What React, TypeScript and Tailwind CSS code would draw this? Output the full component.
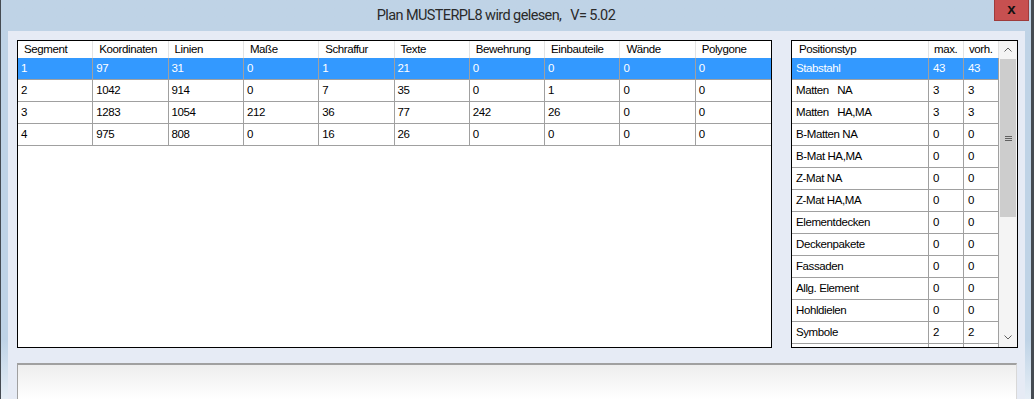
import React from "react";

const font = { fontFamily: '"Liberation Sans", Arial, sans-serif' };

const leftHeaders = ["Segment", "Koordinaten", "Linien", "Maße", "Schraffur", "Texte", "Bewehrung", "Einbauteile", "Wände", "Polygone"];
const leftRows: (string | number)[][] = [
  [1, 97, 31, 0, 1, 21, 0, 0, 0, 0],
  [2, 1042, 914, 0, 7, 35, 0, 1, 0, 0],
  [3, 1283, 1054, 212, 36, 77, 242, 26, 0, 0],
  [4, 975, 808, 0, 16, 26, 0, 0, 0, 0],
];

const rightRows: (string | number)[][] = [
  ["Stabstahl", 43, 43],
  ["Matten   NA", 3, 3],
  ["Matten   HA,MA", 3, 3],
  ["B-Matten NA", 0, 0],
  ["B-Mat HA,MA", 0, 0],
  ["Z-Mat NA", 0, 0],
  ["Z-Mat HA,MA", 0, 0],
  ["Elementdecken", 0, 0],
  ["Deckenpakete", 0, 0],
  ["Fassaden", 0, 0],
  ["Allg. Element", 0, 0],
  ["Hohldielen", 0, 0],
  ["Symbole", 2, 2],
  ["", "", ""],
];

function LeftTable() {
  return (
    <div className="w-[755px] h-[308px] border border-black bg-white overflow-hidden shrink-0">
      <div className="grid grid-cols-10 h-[17px] bg-white">
        {leftHeaders.map((h, i) => (
          <div key={i} className="flex items-center pl-[6px] border-r border-[#e3e3e3] last:border-r-0 text-black whitespace-pre">
            {h}
          </div>
        ))}
      </div>
      {leftRows.map((r, ri) => (
        <div
          key={ri}
          className={
            "grid grid-cols-10 h-[22px] border-b border-[#a0a0a0] " +
            (ri === 0 ? "bg-[#3399ff] text-white" : "bg-white text-black")
          }
        >
          {r.map((c, ci) => (
            <div key={ci} className="flex items-center pl-[3px] border-r border-[#a0a0a0] last:border-r-0">
              {c}
            </div>
          ))}
        </div>
      ))}
    </div>
  );
}

function Chevron({ up }: { up: boolean }) {
  return (
    <svg width="8" height="5" viewBox="0 0 8 5">
      <polyline
        points={up ? "0.5,4.5 4,1 7.5,4.5" : "0.5,0.5 4,4 7.5,0.5"}
        fill="none"
        stroke="#606060"
        strokeWidth="1"
      />
    </svg>
  );
}

function RightTable() {
  return (
    <div className="w-[227px] h-[308px] border border-black bg-white overflow-hidden shrink-0 flex">
      <div className="w-[207px] shrink-0">
        <div className="grid grid-cols-[137px_35px_35px] h-[17px]">
          {["Positionstyp", "max.", "vorh."].map((h, i) => (
            <div
              key={i}
              className={"flex items-center border-r border-[#e3e3e3] " + (i === 0 ? "pl-[7px]" : "pl-[5px]")}
            >
              {h}
            </div>
          ))}
        </div>
        {rightRows.map((r, ri) => (
          <div
            key={ri}
            className={
              "grid grid-cols-[137px_35px_35px] h-[22px] border-b border-[#a0a0a0] " +
              (ri === 0 ? "bg-[#3399ff] text-white" : "bg-white text-black")
            }
          >
            {r.map((c, ci) => (
              <div key={ci} className="flex items-center pl-[4px] border-r border-[#a0a0a0] whitespace-pre">
                {c}
              </div>
            ))}
          </div>
        ))}
      </div>
      <div className="w-[18px] shrink-0 bg-[#f4f4f4] flex flex-col">
        <div className="h-[17px] flex items-center justify-center">
          <Chevron up />
        </div>
        <div className="mx-[1px] mt-[1px] h-[158px] bg-[#cdcdcd] flex flex-col items-center justify-center gap-[1px]">
          <div className="w-[7px] h-[1px] bg-[#606060]" />
          <div className="w-[7px] h-[1px] bg-[#606060]" />
          <div className="w-[7px] h-[1px] bg-[#606060]" />
        </div>
        <div className="flex-1" />
        <div className="h-[17px] flex items-center justify-center mb-[1px]">
          <Chevron up={false} />
        </div>
      </div>
    </div>
  );
}

export default function App() {
  return (
    <div
      className="relative w-[1034px] h-[399px] overflow-hidden flex flex-col border-l border-[#454b52] border-r-[3px] bg-linear-to-b from-[#bfd3e6] via-[#bfd3e6] via-85% to-[#e6eef6]"
      style={font}
    >
      <div className="h-[31px] shrink-0 flex items-center justify-center pr-[40px]">
        <span
          className="text-[14.5px] tracking-[-0.6px] text-[#2a2a2a] whitespace-pre"
          style={{ fontFamily: 'Roboto, "Liberation Sans", sans-serif' }}
        >
          Plan MUSTERPL8 wird gelesen,   V= 5.02
        </span>
      </div>
      <div className="absolute left-[993px] top-0 w-[35px] h-[21px] bg-[#c75050] border border-[#9e3b3b] border-t-0 flex items-center justify-center">
        <span className="text-[15px] font-bold text-[#111] leading-[15px] pb-[3px]">x</span>
      </div>
      <div className="flex-1 ml-[7px] mr-[6px] bg-[#e6ebf5] pt-[9px] pl-[9px] pr-[7px] flex flex-col text-[11.5px] tracking-[-0.4px]">
        <div className="flex gap-[19px]">
          <LeftTable />
          <RightTable />
        </div>
        <div className="mt-[15px] w-[1000px] flex-1 border-t-2 border-l border-r border-t-[#a0a0a0] border-l-[#a0a0a0] border-r-[#d8d8d8] bg-linear-to-b from-[#eeeeee] to-white" />
      </div>
    </div>
  );
}
